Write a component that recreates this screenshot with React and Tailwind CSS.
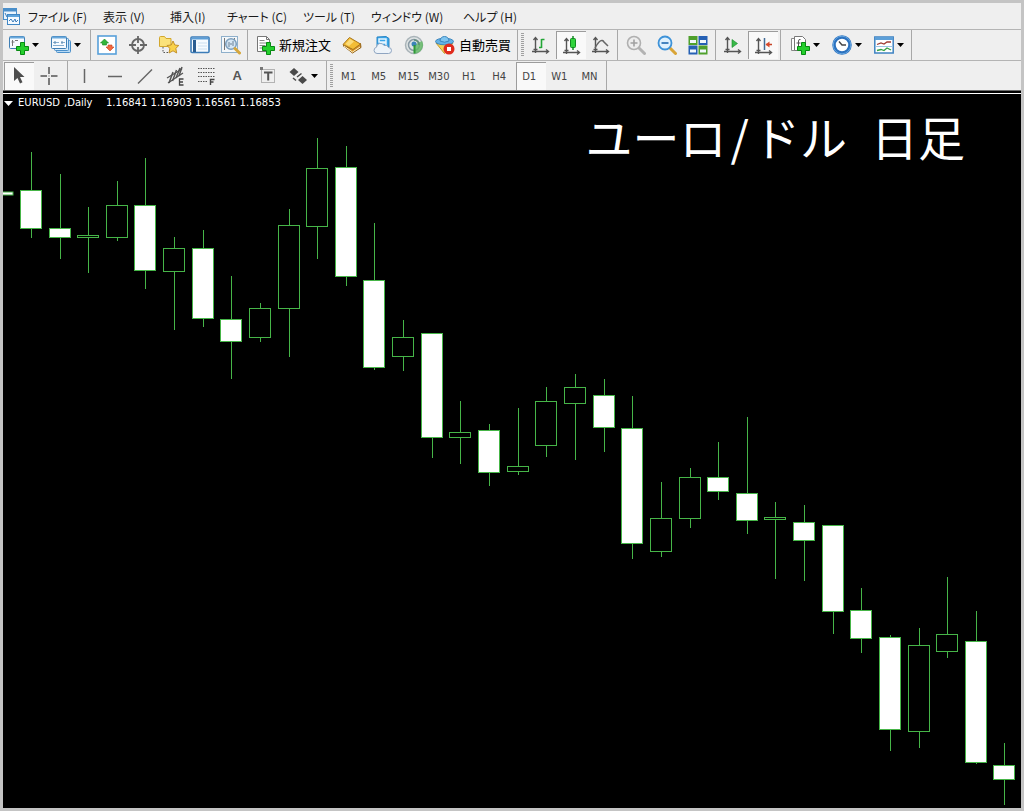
import React from 'react';

const menus = [
  { label: 'ファイル (F)', width: 'w-[75px]' },
  { label: '表示 (V)', width: 'w-[67px]' },
  { label: '挿入(I)', width: 'w-[57px]' },
  { label: 'チャート (C)', width: 'w-[76px]' },
  { label: 'ツール (T)', width: 'w-[68px]' },
  { label: 'ウィンドウ (W)', width: 'w-[92px]' },
  { label: 'ヘルプ (H)', width: 'w-[60px]' },
];

const timeframes = ['M1', 'M5', 'M15', 'M30', 'H1', 'H4', 'D1', 'W1', 'MN'];

// center x, high, body top, body bottom, low, bearish
const candles = [
  [31, 152, 190, 228, 238, 1],
  [60, 174, 228, 237, 259, 1],
  [88, 207, 235, 237, 273, 0],
  [117, 181, 205, 237, 241, 0],
  [145, 158, 205, 270, 289, 1],
  [174, 237, 248, 271, 330, 0],
  [203, 230, 248, 318, 327, 1],
  [231, 276, 319, 341, 379, 1],
  [260, 303, 308, 337, 342, 0],
  [289, 209, 225, 308, 357, 0],
  [317, 138, 168, 226, 259, 0],
  [346, 146, 167, 276, 286, 1],
  [374, 223, 280, 367, 370, 1],
  [403, 320, 337, 356, 371, 0],
  [432, 333, 333, 437, 458, 1],
  [460, 401, 432, 437, 464, 0],
  [489, 424, 430, 472, 486, 1],
  [518, 408, 466, 471, 475, 0],
  [546, 387, 401, 445, 457, 0],
  [575, 374, 387, 403, 460, 0],
  [604, 379, 395, 427, 452, 1],
  [632, 396, 428, 543, 559, 1],
  [661, 482, 518, 551, 557, 0],
  [690, 468, 477, 518, 528, 0],
  [718, 442, 477, 491, 500, 1],
  [747, 417, 493, 520, 534, 1],
  [775, 502, 517, 519, 579, 0],
  [804, 505, 522, 540, 581, 1],
  [833, 525, 525, 611, 634, 1],
  [861, 588, 610, 638, 653, 1],
  [890, 635, 637, 729, 751, 1],
  [919, 628, 645, 731, 748, 0],
  [947, 577, 634, 651, 658, 0],
  [976, 611, 641, 762, 764, 1],
  [1004, 743, 765, 779, 805, 1],
];

const Icon = ({ children }) => (
  <svg
    viewBox="0 0 20 20"
    className="h-5 w-5 shrink-0"
    fill="none"
    aria-hidden="true"
  >
    {children}
  </svg>
);

const Plus = () => (
  <path
    d="M11.5 7.5h4v4h4v4h-4v4h-4v-4h-4v-4h4z"
    fill="#25cf2d"
    stroke="#078a12"
  />
);

const Axes = () => (
  <g stroke="#555" strokeWidth="1.4">
    <path d="M4.5 3v15M1 16.5h16" />
    <path d="M2.5 5l2-2.5 2 2.5M15 14.5l2.5 2-2.5 2M2.5 14.5h4" />
  </g>
);

const Arrow = () => (
  <svg viewBox="0 0 7 4" className="h-1 w-[7px] shrink-0" aria-hidden="true">
    <path d="M0 0h7L3.500 4z" fill="#000" />
  </svg>
);

const LogoIcon = () => (
  <svg viewBox="0 0 18 19" className="h-[19px] w-[18px]" aria-hidden="true">
    <rect x="0.500" y="1.500" width="13" height="11" fill="#e9f4fd" stroke="#4a8fca" />
    <path d="M1 3h12" stroke="#4a8fca" strokeWidth="3" />
    <path d="M2 6l2 4 2-3" stroke="#3b7dbb" fill="none" />
    <rect x="4.500" y="7.500" width="12" height="10" fill="#f4faff" stroke="#3f86c4" />
    <path d="M5 9h11" stroke="#5ea4dc" strokeWidth="2" />
    <path d="M6 14l2-2 2 3 2-3 1 3 2-2" stroke="#3b7dbb" fill="none" />
  </svg>
);

const NewChartIcon = () => (
  <Icon>
    <rect x="0.5" y="1.5" width="15" height="12" rx="1" fill="#f7fbff" stroke="#3f7fb5" />
    <path d="M1 2.500h14" stroke="#69a9dc" strokeWidth="2" />
    <path d="M3.500 5v6M2.500 7h3M6 5.500h3" stroke="#777" />
    <Plus />
  </Icon>
);

const ProfilesIcon = () => (
  <Icon>
    <rect x="5.5" y="5.5" width="14" height="12" rx="1" fill="#b8daf4" stroke="#4a8fca" />
    <rect x="3.5" y="3.5" width="14" height="12" rx="1" fill="#d7ebfa" stroke="#4a8fca" />
    <rect x="0.5" y="1.5" width="15" height="12" rx="1" fill="#f7fbff" stroke="#3f7fb5" />
    <path d="M1 2.500h14" stroke="#69a9dc" strokeWidth="2" />
    <path d="M2 7.500h6m2 0h4M2 10.500h11" stroke="#86aed0" />
    <path d="M4 6v3M11 6v3" stroke="#5b88ae" />
  </Icon>
);

const MarketIcon = () => (
  <Icon>
    <rect x="1" y="1" width="18" height="18" fill="#fff" stroke="#58a0da" strokeWidth="1.600" />
    <path d="M7.500 4l4 4h-2v2h-4V8h-2z" fill="#33b63b" stroke="#15861d" strokeWidth=".6" />
    <path d="M13 16l-4-4h2v-2h4v2h2z" fill="#f2683f" stroke="#c8401d" strokeWidth=".6" />
  </Icon>
);

const DataIcon = () => (
  <Icon>
    <circle cx="10" cy="10" r="6" stroke="#666" strokeWidth="1.800" />
    <path d="M10 1v7M10 12v7M1 10h7M12 10h7" stroke="#666" strokeWidth="1.800" />
  </Icon>
);

const NavigatorIcon = () => (
  <Icon>
    <path d="M.5 2.500q0-1 1-1h4l1.500 2h5v8H.5z" fill="#fbe27a" stroke="#d2a72d" />
    <path d="M4 12v5.500h5" stroke="#555" strokeDasharray="1.500 1.500" />
    <path
      d="M14 6l1.800 4 4 .5-3 2.900.9 4.600L14 15.800 10 18l.9-4.600-3-2.900 4.300-.5z"
      fill="#f9d24b"
      stroke="#c4922b"
    />
  </Icon>
);

const TerminalIcon = () => (
  <Icon>
    <rect x="1" y="2" width="18" height="15.500" rx="1" fill="#f6fbff" stroke="#3c7cb8" strokeWidth="1.600" />
    <path d="M1.500 3.500h17" stroke="#5b9dd6" strokeWidth="2" />
    <path d="M4.500 5v12" stroke="#2a5d92" strokeWidth="3" />
    <path d="M8 8h9M8 11h9M8 14h9" stroke="#cbdff0" />
  </Icon>
);

const TesterIcon = () => (
  <Icon>
    <rect x="0.5" y="1.5" width="16" height="16" fill="#f4f8fb" stroke="#8fb0cb" />
    <path d="M3.500 3v12M6 6v6M13.500 3v3" stroke="#777" />
    <circle cx="10" cy="9" r="5.300" fill="#cfe4f3" fillOpacity=".85" stroke="#7c9fbd" strokeWidth="1.500" />
    <path d="M8 12V7m4 4V6M10 10V8" stroke="#6b8196" />
    <path d="M14 13.500l4.500 4.500" stroke="#d6a73c" strokeWidth="3" strokeLinecap="round" />
  </Icon>
);

const OrderIcon = () => (
  <Icon>
    <path d="M2.500 1.500h9l3 3v12h-12z" fill="#fff" stroke="#777" />
    <path d="M11.500 1.500v3h3" stroke="#777" />
    <path d="M4.500 5.500h5M4.500 8h8M4.500 10.500h6M4.500 13h4" stroke="#888" />
    <Plus />
  </Icon>
);

const BookIcon = () => (
  <Icon>
    <path d="M1 10.500L10.500 18l8.500-5.500-.5-4L11 14z" fill="#d8932a" stroke="#8f5f17" />
    <path d="M2 11l8.500 6 7.500-5" stroke="#fff3c5" />
    <path d="M1 9.500L7.500 2.500 18.500 9 11 14.500z" fill="#f3bd36" stroke="#a9761c" />
    <path d="M3.500 9l4.500-5 4 2.500-5 4.500z" fill="#fbdc7b" />
  </Icon>
);

const CloudIcon = () => (
  <Icon>
    <path d="M4 2l9-.5 3 2V12H4z" fill="#39a6ea" stroke="#2b86c5" />
    <path d="M6 4h7v3H6zM7 8h6v3" stroke="#e5f5ff" strokeWidth="1.500" />
    <path
      d="M4 18.500a3.200 3.200 0 01-.5-6.300A4 4 0 0111 10.500a3.500 3.500 0 014.500 2 3 3 0 010 6z"
      fill="#edf3f9"
      stroke="#8fa5c1"
    />
  </Icon>
);

const SignalIcon = () => (
  <Icon>
    <circle cx="10" cy="10" r="8.500" fill="#dfe4e4" stroke="#a9b3b8" strokeWidth="1.500" />
    <circle cx="10" cy="10" r="5.500" stroke="#8a9aa5" strokeWidth="1.500" />
    <path d="M10 10l8-4a8.500 8.500 0 01-8 12.500z" fill="#5fb862" fillOpacity=".8" />
    <path d="M10 5a5 5 0 015 5" stroke="#5f8f78" strokeWidth="1.500" />
    <circle cx="10" cy="9" r="2.500" fill="#3c84b8" />
    <path d="M10.500 10v8.500" stroke="#2f9a36" strokeWidth="2" />
  </Icon>
);

const AutoTradeIcon = () => (
  <Icon>
    <path d="M1 8l8.500 10.500L18 8z" fill="#f4d258" stroke="#c49a2a" />
    <ellipse cx="9.500" cy="6.500" rx="9" ry="3.300" fill="#64b2e6" stroke="#3c86bd" />
    <path d="M5 6c0-6 9-6 9 0q-4.500 2.500-9 0z" fill="#7fc5f0" stroke="#3c86bd" />
    <circle cx="14" cy="14" r="5.500" fill="#e02b1d" />
    <rect x="12" y="12" width="4" height="4" fill="#fff" />
  </Icon>
);

const BarsIcon = () => (
  <Icon>
    <Axes />
    <path d="M10.500 4v9M10.500 4.500h3M8 12.500h2.500" stroke="#22a536" strokeWidth="1.600" />
  </Icon>
);

const CandlesIcon = () => (
  <Icon>
    <Axes />
    <path d="M11 0v14" stroke="#118a20" strokeWidth="1.500" />
    <rect x="8.500" y="2.500" width="5" height="9" rx="1" fill="#2fd33c" stroke="#118a20" />
  </Icon>
);

const LineIcon = () => (
  <Icon>
    <Axes />
    <path d="M4 13Q10 2 13 7l4 4" stroke="#666" strokeWidth="1.500" />
  </Icon>
);

const ZoomInIcon = () => (
  <Icon>
    <path d="M12.500 12.500l6 6" stroke="#b3b3b3" strokeWidth="3" strokeLinecap="round" />
    <circle cx="8" cy="8" r="6.500" fill="#ededed" stroke="#b0b0b0" strokeWidth="1.600" />
    <path d="M8 4.500v7M4.500 8h7" stroke="#a0a0a0" strokeWidth="1.600" />
  </Icon>
);

const ZoomOutIcon = () => (
  <Icon>
    <path d="M12.500 12.500l6 6" stroke="#d9a436" strokeWidth="3" strokeLinecap="round" />
    <circle cx="8" cy="8" r="6.500" fill="#dff1fd" stroke="#3d92d8" strokeWidth="1.800" />
    <path d="M4.500 8h7" stroke="#3478b8" strokeWidth="1.800" />
  </Icon>
);

const TileIcon = () => (
  <Icon>
    <path d="M.5 1h9v9h-9zM10.500 10.500h9v9h-9z" fill="#4fa02c" />
    <path d="M10.500 1h9v9h-9zM.5 10.500h9v9h-9z" fill="#2560b4" />
    <path d="M2 5h6v3H2zM12 5h6v3h-6zM2 14.500h6v3H2zM12 14.500h6v3h-6z" fill="#f0f7fb" />
  </Icon>
);

const ScrollIcon = () => (
  <Icon>
    <Axes />
    <path d="M9 4.500v8l5.500-4z" fill="#38b848" stroke="#168c27" strokeWidth=".6" />
  </Icon>
);

const ShiftIcon = () => (
  <Icon>
    <Axes />
    <path d="M10.500 2v12" stroke="#426b95" strokeWidth="1.500" />
    <path d="M18 8.500h-6" stroke="#c74326" strokeWidth="1.500" />
    <path d="M11.500 8.500l4-3v6z" fill="#d9492a" />
  </Icon>
);

const IndicatorsIcon = () => (
  <Icon>
    <path d="M1.500 3.500h9v12h-9z" fill="#fff" stroke="#888" />
    <path d="M4.500 1.500h8l3 3v11h-11z" fill="#fff" stroke="#777" />
    <path d="M8.500 12V6q0-2 2-1.500M6.500 8h4" stroke="#555" />
    <Plus />
  </Icon>
);

const ClockIcon = () => (
  <Icon>
    <circle cx="10" cy="10" r="8" fill="#fff" stroke="#2c72bf" strokeWidth="3.500" />
    <circle cx="10" cy="10" r="8.800" stroke="#74b2e9" strokeWidth=".8" />
    <path d="M7 6.500l3 3.500h4" stroke="#444" strokeWidth="1.400" />
  </Icon>
);

const TemplateIcon = () => (
  <Icon>
    <rect x="0.800" y="2" width="18.400" height="16" fill="#fff" stroke="#3f83c2" strokeWidth="1.500" />
    <path d="M1 3.500h18" stroke="#5c9fd8" strokeWidth="3" />
    <path d="M1.500 11.500h17" stroke="#9dc4e4" />
    <path d="M3 9.500l4-1.500 3 1 3-2 4 0" stroke="#a03c32" strokeWidth="1.300" />
    <path d="M3 15.500l4-1 3 1 3-2.500 4 2" stroke="#35a243" strokeWidth="1.300" />
  </Icon>
);

const CursorIcon = () => (
  <Icon>
    <path d="M4 1v14l3.500-3 2.500 5.500 2.500-1.200-2.500-5.300h4.500z" fill="#4d4d4d" />
  </Icon>
);

const CrosshairIcon = () => (
  <Icon>
    <path d="M10 1v7M10 12v7M1.500 10h6.500M12 10h6.500" stroke="#555" strokeWidth="1.500" />
    <path d="M9.500 10h1" stroke="#555" />
  </Icon>
);

const VLineIcon = () => (
  <Icon>
    <path d="M10.500 3v14" stroke="#666" strokeWidth="1.500" />
  </Icon>
);

const HLineIcon = () => (
  <Icon>
    <path d="M3 10.500h14" stroke="#666" strokeWidth="1.500" />
  </Icon>
);

const TrendIcon = () => (
  <Icon>
    <path d="M3 17.500L17 3.500" stroke="#666" strokeWidth="1.500" />
  </Icon>
);

const ChannelIcon = () => (
  <Icon>
    <path d="M1 12L16 3M2 17l15-10" stroke="#555" strokeWidth="1.300" />
    <path d="M3 17L7 6M6.500 15l4-11M10 12l4-10M13 10l3-9" stroke="#555" strokeWidth="1.500" />
    <path d="M17.500 13h-4v6h4M13.500 16h3.500" stroke="#444" strokeWidth="1.300" />
  </Icon>
);

const FiboIcon = () => (
  <Icon>
    <path
      d="M1 2.500h17M1 6.500h17M1 10.500h17M1 15.500h10"
      stroke="#555"
      strokeDasharray="1.500 1"
    />
    <path d="M17.500 13.500h-4V19M13.500 16h3" stroke="#444" strokeWidth="1.400" />
  </Icon>
);

const TextLabelIcon = () => (
  <Icon>
    <rect x="3.500" y="3.500" width="13" height="13" stroke="#777" strokeDasharray="1 1" />
    <path d="M2 1h3v3H2z" fill="#777" />
    <path d="M6 6.500h8.500M10.200 6.500v8" stroke="#555" strokeWidth="2" />
  </Icon>
);

const ShapesIcon = () => (
  <Icon>
    <path d="M6 2l4.500 4L6 10 1.500 6zM14.500 10l4.500 4-4.500 4-4.500-4z" fill="#4a4a4a" />
    <path d="M5 12l3 2.500M9 11l4.500-3.500" stroke="#4a4a4a" strokeWidth="1.500" />
  </Icon>
);

const marketTools = [
  { name: '気配値表示', icon: MarketIcon },
  { name: 'データウィンドウ', icon: DataIcon },
  { name: 'ナビゲーター', icon: NavigatorIcon },
  { name: 'ターミナル', icon: TerminalIcon },
  { name: 'ストラテジーテスター', icon: TesterIcon },
];

const drawTools = [
  { name: '垂直線', icon: VLineIcon },
  { name: '水平線', icon: HLineIcon },
  { name: 'トレンドライン', icon: TrendIcon },
  { name: 'チャネル', icon: ChannelIcon },
  { name: 'フィボナッチ', icon: FiboIcon },
];

const Sep = () => <div className="mx-px w-px self-stretch bg-[#a8a8a8]" />;

const Grip = () => (
  <div className="flex w-[7px] items-center justify-center">
    <div className="h-6 w-[3px] bg-[repeating-linear-gradient(#a0a0a0_0_1px,#efefef_1px_2px)]" />
  </div>
);

const ToolButton = ({ name, icon: Glyph, active, wide }) => (
  <button
    type="button"
    aria-label={name}
    aria-pressed={active}
    className={`flex h-7 shrink-0 items-center justify-center ${
      wide ? 'w-[31px]' : 'w-[30px]'
    } ${active ? 'border-t border-l border-[#9c9c9c] bg-[#f9f9f9]' : ''}`}
  >
    <Glyph />
  </button>
);

const DropButton = ({ name, icon: Glyph }) => (
  <button
    type="button"
    aria-label={name}
    className="flex h-7 w-[42px] shrink-0 items-center gap-[3px] pl-[5px]"
  >
    <Glyph />
    <Arrow />
  </button>
);

const TextButton = ({ label, icon: Glyph }) => (
  <button
    type="button"
    className="flex h-7 w-[87px] shrink-0 items-center gap-1 pl-1.5 text-[13px] leading-4 whitespace-nowrap text-black"
  >
    <Glyph />
    {label}
  </button>
);

const MenuBar = () => (
  <nav className="flex h-[27px] items-center border-b border-[#b4b4b4]">
    <span className="w-[25px] shrink-0">
      <LogoIcon />
    </span>
    {menus.map((menu) => (
      <button
        key={menu.label}
        type="button"
        className={`${menu.width} h-full shrink-0 pt-px text-left text-xs whitespace-nowrap text-[#1a1a1a] [font-feature-settings:'palt']`}
      >
        {menu.label}
      </button>
    ))}
  </nav>
);

const StandardBar = () => (
  <div className="flex h-[31px] border-b border-[#b4b4b4]">
    <div className="flex items-center border-r border-[#a8a8a8]">
      <div className="flex px-px">
        <DropButton name="新規チャート" icon={NewChartIcon} />
        <DropButton name="チャートの組表示" icon={ProfilesIcon} />
      </div>
      <Sep />
      <div className="grid w-[154px] grid-cols-5 justify-items-center">
        {marketTools.map((tool) => (
          <ToolButton key={tool.name} {...tool} />
        ))}
      </div>
      <Sep />
      <TextButton label="新規注文" icon={OrderIcon} />
      <ToolButton name="MetaEditor" icon={BookIcon} wide />
      <ToolButton name="VPS" icon={CloudIcon} wide />
      <ToolButton name="シグナル" icon={SignalIcon} wide />
      <TextButton label="自動売買" icon={AutoTradeIcon} />
      <Sep />
      <Grip />
      <ToolButton name="バーチャート" icon={BarsIcon} />
      <ToolButton name="ローソク足" icon={CandlesIcon} active />
      <ToolButton name="ラインチャート" icon={LineIcon} />
      <Sep />
      <div className="flex px-px">
        <ToolButton name="ズームイン" icon={ZoomInIcon} wide />
        <ToolButton name="ズームアウト" icon={ZoomOutIcon} wide />
        <ToolButton name="整列" icon={TileIcon} wide />
      </div>
      <Sep />
      <div className="flex px-px">
        <ToolButton name="自動スクロール" icon={ScrollIcon} />
        <ToolButton name="チャートシフト" icon={ShiftIcon} active />
      </div>
      <Sep />
      <div className="flex pl-[3px]">
        <DropButton name="インディケータ" icon={IndicatorsIcon} />
        <DropButton name="時間足設定" icon={ClockIcon} />
        <DropButton name="定型チャート" icon={TemplateIcon} />
      </div>
    </div>
  </div>
);

const DrawBar = () => (
  <div className="flex h-[30px] border-b border-[#6c6c6c]">
    <div className="flex items-center border-r border-[#a8a8a8]">
      <div className="flex pr-0.5 pl-px">
        <ToolButton name="カーソル" icon={CursorIcon} active />
        <ToolButton name="クロスヘア" icon={CrosshairIcon} />
      </div>
      <Sep />
      <div className="grid w-[214px] grid-cols-7 justify-items-center">
        {drawTools.map((tool) => (
          <ToolButton key={tool.name} {...tool} />
        ))}
        <button
          type="button"
          className="h-7 w-[30px] font-['Liberation_Sans',sans-serif] text-[13px] font-bold text-[#555]"
        >
          A
        </button>
        <ToolButton name="テキストラベル" icon={TextLabelIcon} />
      </div>
      <DropButton name="矢印" icon={ShapesIcon} />
      <Sep />
      <Grip />
      <div className="grid w-[271px] grid-cols-9">
        {timeframes.map((tf) => (
          <button
            key={tf}
            type="button"
            aria-pressed={tf === 'D1'}
            className={`h-7 border-t border-l pt-px pr-1 font-['DejaVu_Sans',sans-serif] text-[10px] text-[#444] ${
              tf === 'D1'
                ? 'border-[#9c9c9c] bg-[#f9f9f9]'
                : 'border-transparent'
            }`}
          >
            {tf}
          </button>
        ))}
      </div>
    </div>
  </div>
);

const Candle = ({ data }) => {
  const [x, high, top, bottom, low, bearish] = data;
  return (
    <g stroke="#46b548" shapeRendering="crispEdges">
      <path d={`M${x + 0.5} ${high}V${low}`} />
      <rect
        x={x - 10.5}
        y={top + 0.5}
        width="21"
        height={bottom - top}
        fill={bearish ? '#fff' : '#000'}
      />
    </g>
  );
};

const Chart = () => (
  <main className="relative border-t border-white bg-black text-white">
    <svg
      viewBox="3 94 1018 714"
      className="block h-auto w-full"
      role="img"
      aria-label="EURUSD Daily"
    >
      <rect x="-8" y="192" width="21" height="3" fill="#fff" stroke="#46b548" />
      {candles.map((data) => (
        <Candle key={data[0]} data={data} />
      ))}
    </svg>
    {/* Quote line */}
    <div className="absolute top-0 left-0 flex items-center pt-px pl-px font-['DejaVu_Sans',sans-serif] text-[10px] leading-4 whitespace-nowrap">
      <svg viewBox="0 0 9 5" className="mr-[5px] h-[5px] w-[9px]" aria-hidden="true">
        <path d="M0 0h9L4.500 5z" fill="#fff" />
      </svg>
      <span className="w-[46px]">EURUSD</span>
      <span className="w-[42px]">,Daily</span>
      <span>1.16841 1.16903 1.16561 1.16853</span>
    </div>
    <h1 className="absolute top-2.5 right-14 flex gap-6 text-[47px] leading-[64px] font-normal whitespace-nowrap">
      <span>
        ユーロ<span className="px-1">/</span>ドル
      </span>
      <span>日足</span>
    </h1>
  </main>
);

const App = () => {
  return (
    <div className="border-[3px] border-[#c4c4c4] bg-[#efefef] font-['Noto_Sans_CJK_JP',sans-serif]">
      <MenuBar />
      <StandardBar />
      <DrawBar />
      <div className="h-0.5 bg-black" />
      <Chart />
    </div>
  );
};

export default App;
